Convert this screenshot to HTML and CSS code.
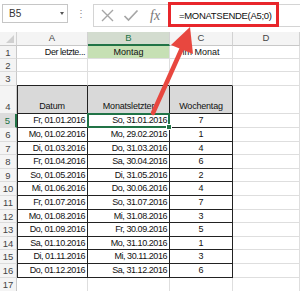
FILE: index.html
```html
<!DOCTYPE html>
<html lang="de">
	<head>
		<meta charset="UTF-8" />
		<link rel="stylesheet" href="styles.css">
	</head>
	<body>
		<!-- Formula bar -->
		<div class="toolbar">
			<div class="namebox"><span>B5</span><span class="caret"></span></div>
			<span class="grip">⋮</span>
			<div class="fbar">
				<div class="fbtns">
					<svg class="ico" width="15" height="15" viewBox="0 0 15 15"><path d="M2 2 L13 13 M13 2 L2 13" stroke="#a6a6a6" stroke-width="1.4" fill="none"/></svg>
					<svg class="ico" width="16" height="15" viewBox="0 0 16 15"><path d="M1.5 8 L5.5 12 L14.5 2.5" stroke="#a6a6a6" stroke-width="1.7" fill="none"/></svg>
					<i class="fx">fx</i>
				</div>
				<div class="finput">=MONATSENDE(A5;0)</div>
			</div>
		</div>

		<!-- Sheet -->
		<div class="sheet">
			<div class="hd corner"><span class="tri"></span></div>
			<div class="hd">A</div>
			<div class="hd sel">B</div>
			<div class="hd">C</div>
			<div class="hd">D</div>

			<div class="rh">1</div>
			<div class="c r">Der letzte...</div>
			<div class="c ctr green">Montag</div>
			<div class="c ctr">im Monat</div>
			<div class="c"></div>

			<div class="rh">2</div><div class="c"></div><div class="c"></div><div class="c"></div><div class="c"></div>
			<div class="rh">3</div><div class="c tt"></div><div class="c tt"></div><div class="c tt"></div><div class="c"></div>

			<div class="rh bottom">4</div>
			<div class="c t th first">Datum</div>
			<div class="c t th">Monatsletzter</div>
			<div class="c t th">Wochentag</div>
			<div class="c"></div>

			<div class="rh rsel">5</div>
			<div class="c t r first">Fr, 01.01.2016</div>
			<div class="c t r active">So, 31.01.2016</div>
			<div class="c t ctr">7</div>
			<div class="c"></div>

			<div class="rh">6</div>
			<div class="c t r first">Mo, 01.02.2016</div>
			<div class="c t r">Mo, 29.02.2016</div>
			<div class="c t ctr">1</div>
			<div class="c"></div>

			<div class="rh">7</div>
			<div class="c t r first">Di, 01.03.2016</div>
			<div class="c t r">Do, 31.03.2016</div>
			<div class="c t ctr">4</div>
			<div class="c"></div>

			<div class="rh">8</div>
			<div class="c t r first">Fr, 01.04.2016</div>
			<div class="c t r">Sa, 30.04.2016</div>
			<div class="c t ctr">6</div>
			<div class="c"></div>

			<div class="rh">9</div>
			<div class="c t r first">So, 01.05.2016</div>
			<div class="c t r">Di, 31.05.2016</div>
			<div class="c t ctr">2</div>
			<div class="c"></div>

			<div class="rh">10</div>
			<div class="c t r first">Mi, 01.06.2016</div>
			<div class="c t r">Do, 30.06.2016</div>
			<div class="c t ctr">4</div>
			<div class="c"></div>

			<div class="rh">11</div>
			<div class="c t r first">Fr, 01.07.2016</div>
			<div class="c t r">So, 31.07.2016</div>
			<div class="c t ctr">7</div>
			<div class="c"></div>

			<div class="rh">12</div>
			<div class="c t r first">Mo, 01.08.2016</div>
			<div class="c t r">Mi, 31.08.2016</div>
			<div class="c t ctr">3</div>
			<div class="c"></div>

			<div class="rh">13</div>
			<div class="c t r first">Do, 01.09.2016</div>
			<div class="c t r">Fr, 30.09.2016</div>
			<div class="c t ctr">5</div>
			<div class="c"></div>

			<div class="rh">14</div>
			<div class="c t r first">Sa, 01.10.2016</div>
			<div class="c t r">Mo, 31.10.2016</div>
			<div class="c t ctr">1</div>
			<div class="c"></div>

			<div class="rh">15</div>
			<div class="c t r first">Di, 01.11.2016</div>
			<div class="c t r">Mi, 30.11.2016</div>
			<div class="c t ctr">3</div>
			<div class="c"></div>

			<div class="rh">16</div>
			<div class="c t r first">Do, 01.12.2016</div>
			<div class="c t r">Sa, 31.12.2016</div>
			<div class="c t ctr">6</div>
			<div class="c"></div>

			<div class="rh">17</div><div class="c"></div><div class="c"></div><div class="c"></div><div class="c"></div>
		</div>

		<!-- Annotation: red box and arrow -->
		<svg class="note" width="300" height="291" viewBox="0 0 300 291">
			<rect x="169.5" y="3.5" width="108" height="22" fill="none" stroke="#e8262b" stroke-width="3"/>
			<line x1="153" y1="113" x2="183" y2="46" stroke="#e8473f" stroke-width="4.5" stroke-linecap="round"/>
			<polygon points="190,27 193,54 171,45" fill="#e8473f"/>
		</svg>
	</body>
</html>
```

FILE: styles.css
```css
body {
	margin: 0;
	width: 300px;
	height: 291px;
	overflow: hidden;
	background: #ffffff;
	font-family: "Liberation Sans", Arial, sans-serif;
	font-size: 9px;
	color: #111111;
	position: relative;
}

.toolbar {
	height: 32px;
	display: flex;
	align-items: flex-start;
	padding-top: 4px;
	box-sizing: border-box;
}

.namebox {
	margin-left: 2px;
	width: 66px;
	height: 19px;
	border: 1px solid #c6c6c6;
	box-sizing: border-box;
	display: flex;
	align-items: center;
	justify-content: space-between;
	padding: 0 3px 0 6px;
	font-size: 10px;
	color: #333333;
}

.caret {
	width: 0;
	height: 0;
	border-left: 2.5px solid transparent;
	border-right: 2.5px solid transparent;
	border-top: 3px solid #555555;
}

.grip {
	width: 25px;
	text-align: center;
	color: #8a8a8a;
	font-size: 10px;
	line-height: 19px;
}

.fbar {
	flex: 1;
	height: 23px;
	display: flex;
	border: 1px solid #d4d4d4;
	border-right: none;
	box-sizing: border-box;
}

.fbtns {
	width: 75px;
	display: flex;
	align-items: center;
	gap: 8px;
	padding-left: 6px;
	box-sizing: border-box;
	border-right: 1px solid #d4d4d4;
}

.fx {
	font-family: "Liberation Serif", serif;
	font-size: 14px;
	color: #777777;
	margin-left: 3px;
}

.finput {
	flex: 1;
	display: flex;
	align-items: center;
	padding-left: 10px;
	font-size: 9.5px;
	letter-spacing: -0.3px;
	color: #111111;
}

.sheet {
	display: grid;
	grid-template-columns: 17px 71px 82px 63px 67px;
	grid-template-rows: 13.5px 13.4px 13.4px 13.4px 28.8px repeat(12, 13.6px) 1fr;
	height: 259px;
}

.hd {
	background: #f4f4f4;
	border-right: 1px solid #d2d2d2;
	border-bottom: 1px solid #c8c8c8;
	box-sizing: border-box;
	text-align: center;
	font-size: 9.5px;
	line-height: 12px;
	color: #444444;
}

.hd.sel {
	background: #d3dccf;
	color: #217346;
	border-bottom: 2px solid #217346;
}

.corner {
	position: relative;
}

.tri {
	position: absolute;
	right: 2px;
	bottom: 2px;
	width: 0;
	height: 0;
	border-left: 8px solid transparent;
	border-bottom: 8px solid #d0d0d0;
}

.rh {
	background: #f4f4f4;
	border-right: 1px solid #c8c8c8;
	border-bottom: 1px solid #dcdcdc;
	box-sizing: border-box;
	text-align: center;
	font-size: 9.5px;
	line-height: 13px;
	color: #444444;
}

.rh.bottom {
	display: flex;
	align-items: flex-end;
	justify-content: center;
}

.rh.rsel {
	background: #dcdcdc;
	color: #217346;
	border-right: 2px solid #217346;
}

.c {
	border-right: 1px solid #dedede;
	border-bottom: 1px solid #dedede;
	box-sizing: border-box;
	line-height: 13px;
	white-space: nowrap;
	overflow: hidden;
}

.r {
	text-align: right;
	padding-right: 2px;
	letter-spacing: -0.45px;
}

.ctr {
	text-align: center;
}

.green {
	background: #c6e0b4;
}

.tt {
	border-bottom-color: #222222;
}

.t {
	border-right-color: #222222;
	border-bottom-color: #222222;
}

.first {
	box-shadow: inset 1px 0 #222222;
}

.th {
	background: #d9d9d9;
	display: flex;
	align-items: flex-end;
	justify-content: center;
	letter-spacing: -0.2px;
}

.active {
	position: relative;
	overflow: visible;
}

.active::after {
	content: "";
	position: absolute;
	left: -1px;
	top: -1px;
	right: -1px;
	bottom: -1px;
	border: 2px solid #217346;
}

.active::before {
	content: "";
	position: absolute;
	right: -3px;
	bottom: -3px;
	width: 4px;
	height: 4px;
	background: #217346;
	border: 1px solid #ffffff;
	z-index: 1;
}

.note {
	position: absolute;
	left: 0;
	top: 0;
	pointer-events: none;
}
```
